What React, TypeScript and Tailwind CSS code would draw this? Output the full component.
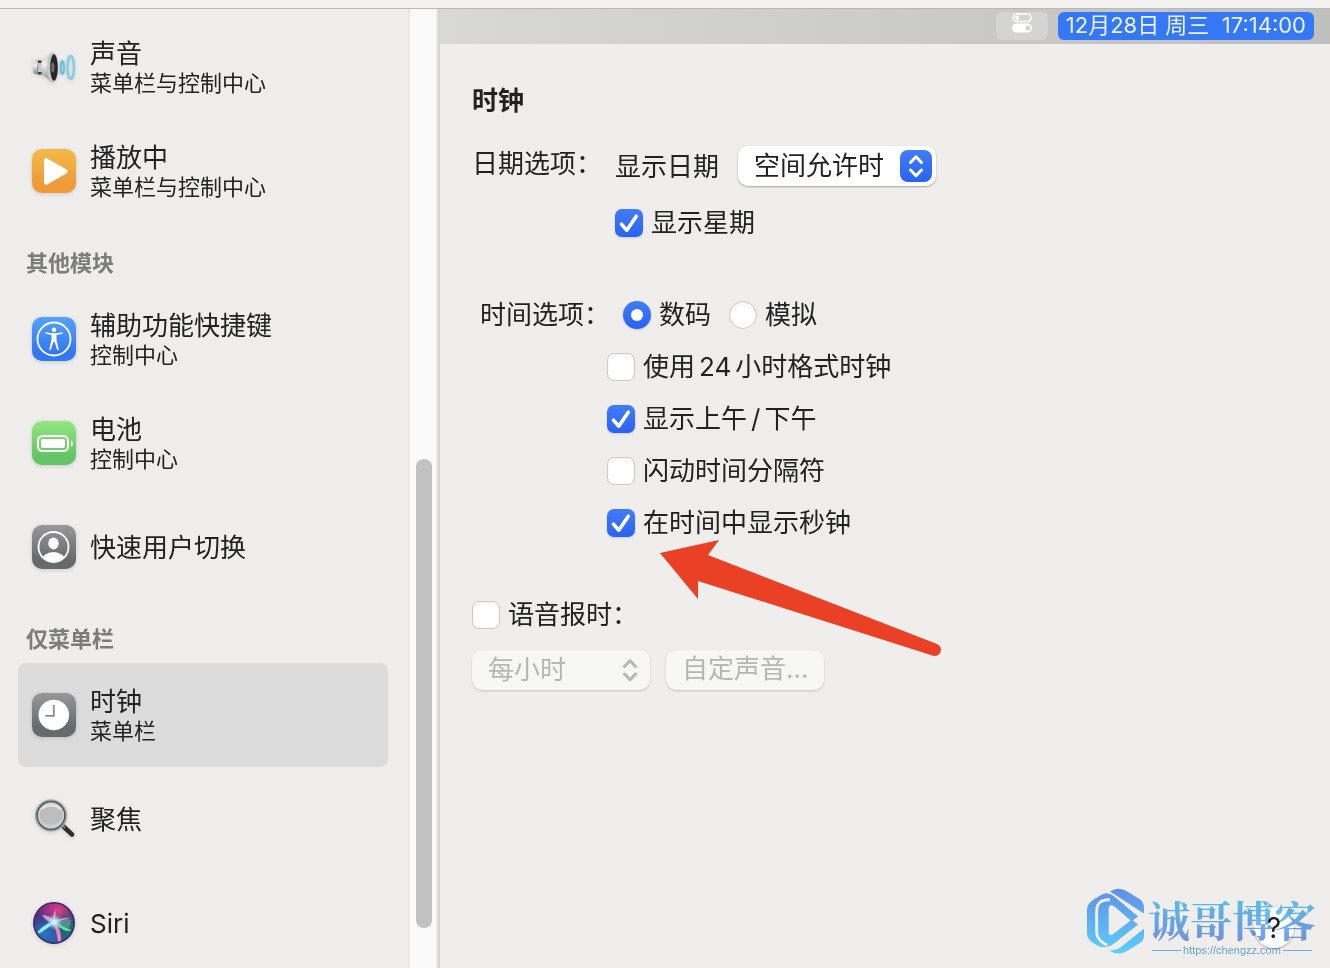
import { useState } from "react";
import type { ReactNode } from "react";

// ─── Sidebar icons ────────────────────────────────────────────────────────────
function Tile({ id, from, to, children }: { id: string; from: string; to: string; children: ReactNode }) {
    return (
        <svg className="w-11 h-11 flex-shrink-0 overflow-visible drop-shadow-sm" viewBox="0 0 44 44" fill="none">
            <defs>
                <linearGradient id={id} x1="0" y1="0" x2="0" y2="1">
                    <stop offset="0" stopColor={from} />
                    <stop offset="0.8" stopColor={to} />
                </linearGradient>
            </defs>
            <rect width="44" height="44" rx="10" fill={`url(#${id})`} />
            {children}
        </svg>
    );
}

function SoundIcon() {
    return (
        <svg className="w-11 h-11 flex-shrink-0 drop-shadow-sm" viewBox="0 0 44 44" fill="none">
            <defs>
                <linearGradient id="cone" x1="0" y1="0" x2="0" y2="1">
                    <stop offset="0" stopColor="#c5c8c9" />
                    <stop offset="0.4" stopColor="#eeefef" />
                    <stop offset="1" stopColor="#7f8384" />
                </linearGradient>
            </defs>
            <path d="M3 15q-2 1-2 7.500t2 6.500l6 .5V14.500z" fill="url(#cone)" />
            <path d="M6 15.500h4v14H6q-1-7 0-14z" fill="#3f4243" />
            <path d="M6 18h4v9H6z" fill="#c4c8c9" />
            <path d="M9.500 15C14 13.500 17 10 20 7.500v30C17 35 14 31 9.500 30z" fill="url(#cone)" />
            <ellipse cx="20.500" cy="22.500" rx="5.500" ry="15" fill="#c3c5c6" />
            <ellipse cx="22" cy="22.500" rx="3.800" ry="13.200" fill="#252728" />
            <ellipse cx="20.800" cy="22.500" rx="1.600" ry="5" fill="#6a6c6d" />
            <ellipse cx="30.300" cy="22.500" rx="1.600" ry="6.500" stroke="#69c1dc" strokeWidth="2.200" />
            <ellipse cx="38.700" cy="22.500" rx="3.200" ry="11.500" stroke="#84cde3" strokeWidth="2.400" />
        </svg>
    );
}

function PlayIcon() {
    return (
        <Tile id="play" from="#f1bb48" to="#f09a38">
            <path d="M12 11.200c0-2 1.500-2.800 3.200-1.800l19 10.900c1.900 1.100 1.900 3 0 4.100l-19 11c-1.700 1-3.200.2-3.200-1.800z" fill="#fff" />
        </Tile>
    );
}

function AccessibilityIcon() {
    return (
        <Tile id="access" from="#54a2f9" to="#3477f5">
            <circle cx="22" cy="22" r="16.500" stroke="#fff" strokeWidth="1.800" />
            <circle cx="22" cy="12.700" r="2.200" fill="#fff" />
            <path
                d="M13.500 15.300q8.500 2 17 0 .8 1-.3 1.400l-5.700 1.300v4.500l2.300 10.300q-.7 1.200-1.600.2L22.600 25h-1.200l-2.600 8q-.9 1-1.600-.2l2.300-10.300V18l-5.700-1.300q-1.100-.4-.3-1.400z"
                fill="#fff"
            />
        </Tile>
    );
}

function BatteryIcon() {
    return (
        <Tile id="battery" from="#93e781" to="#65c466">
            <rect x="6" y="15" width="30" height="15" rx="4.500" stroke="#fff" strokeWidth="2" />
            <rect x="9" y="18" width="24" height="9" rx="2" fill="#fff" />
            <path d="M39 19.500q2 1 2 3t-2 3z" fill="#fff" />
        </Tile>
    );
}

function UserIcon() {
    return (
        <Tile id="user" from="#98989c" to="#68696b">
            <clipPath id="userClip"><circle cx="21.500" cy="22" r="14.500" /></clipPath>
            <circle cx="21.500" cy="22" r="15" stroke="#fff" strokeWidth="1.800" />
            <ellipse cx="21.500" cy="18.500" rx="5.200" ry="6" fill="#fff" />
            <ellipse cx="21.500" cy="36" rx="12" ry="9" fill="#fff" clipPath="url(#userClip)" />
        </Tile>
    );
}

function ClockIcon() {
    return (
        <Tile id="clock" from="#98989c" to="#68696b">
            <circle cx="21.800" cy="22" r="15.300" fill="#fff" />
            <path d="M21.800 12v10.800H13.300" stroke="#8b8b8e" strokeWidth="1.800" />
        </Tile>
    );
}

function SpotlightIcon() {
    return (
        <svg className="w-11 h-11 flex-shrink-0 drop-shadow-sm" viewBox="0 0 44 44" fill="none">
            <path d="M32 30l8 7.500" stroke="#2c2d2e" strokeWidth="4.500" strokeLinecap="round" />
            <path d="M30 28l3 2.700" stroke="#8a8b8c" strokeWidth="2" />
            <circle cx="19" cy="18.500" r="15" fill="#c9cfd3" stroke="#9b9d9e" strokeWidth="2" />
            <circle cx="19" cy="18.500" r="13.800" stroke="#4a4c4d" strokeWidth="1.200" />
            <ellipse cx="19" cy="18.500" rx="11.500" ry="9.500" fill="#bdbdbc" />
            <path d="M9.500 12q9.500-7.500 19 0" stroke="#dfe7eb" strokeWidth="2" />
        </svg>
    );
}

function SiriIcon() {
    return (
        <svg className="w-11 h-11 flex-shrink-0 drop-shadow-sm" viewBox="0 0 44 44" fill="none">
            <defs>
                <linearGradient id="siriBase" x1="0.2" y1="0" x2="0.5" y2="1">
                    <stop offset="0" stopColor="#8c2a86" />
                    <stop offset="0.45" stopColor="#3e2f76" />
                    <stop offset="1" stopColor="#1f58a4" />
                </linearGradient>
                <radialGradient id="siriGlow">
                    <stop offset="0" stopColor="#fff" />
                    <stop offset="0.4" stopColor="#b7e9f6" stopOpacity="0.8" />
                    <stop offset="1" stopColor="#8fd8f0" stopOpacity="0" />
                </radialGradient>
                <radialGradient id="siriPink" cx="0.6" cy="0.2" r="0.45">
                    <stop offset="0" stopColor="#dd3c84" />
                    <stop offset="1" stopColor="#dd3c84" stopOpacity="0" />
                </radialGradient>
                <radialGradient id="siriTeal" cx="0.85" cy="0.65" r="0.45">
                    <stop offset="0" stopColor="#2b7068" />
                    <stop offset="1" stopColor="#2b7068" stopOpacity="0" />
                </radialGradient>
                <radialGradient id="siriBlue" cx="0.25" cy="0.75" r="0.5">
                    <stop offset="0" stopColor="#2a74c4" />
                    <stop offset="1" stopColor="#2a74c4" stopOpacity="0" />
                </radialGradient>
            </defs>
            <circle cx="22" cy="22" r="20.500" fill="url(#siriBase)" />
            <circle cx="22" cy="22" r="20.500" fill="url(#siriPink)" />
            <circle cx="22" cy="22" r="20.500" fill="url(#siriBlue)" />
            <circle cx="22" cy="22" r="20.500" fill="url(#siriTeal)" />
            <path d="M22 20q8-5 17-1 0 5-2 8-7-1-15-7z" fill="#6cc9b4" opacity="0.45" />
            <path d="M22 21l17 8q-3 2-7 0-6-3-10-8z" fill="#59e3ab" />
            <path d="M23 20Q13 22 5.500 31l2 1.500Q16 27 23 22z" fill="#8af0ea" />
            <path d="M21 21q4 10 5 20l3-1q1-10-6-20z" fill="#f07fc2" />
            <path d="M10 14q8 0 13 7-4-6 1-12-1 6-1 12 7-5 16-4-9 1-16 5-9-1-13-8z" fill="#dcb6ec" opacity="0.8" />
            <circle cx="22.500" cy="21" r="8" fill="url(#siriGlow)" />
            <circle cx="22" cy="22" r="20.200" stroke="#3c2a66" strokeWidth="1.400" />
        </svg>
    );
}

// ─── Sidebar ──────────────────────────────────────────────────────────────────
type Item = { title: string; subtitle?: string; icon: ReactNode };

const groups: { heading?: string; items: Item[] }[] = [
    {
        items: [
            { title: "声音", subtitle: "菜单栏与控制中心", icon: <SoundIcon /> },
            { title: "播放中", subtitle: "菜单栏与控制中心", icon: <PlayIcon /> },
        ],
    },
    {
        heading: "其他模块",
        items: [
            { title: "辅助功能快捷键", subtitle: "控制中心", icon: <AccessibilityIcon /> },
            { title: "电池", subtitle: "控制中心", icon: <BatteryIcon /> },
            { title: "快速用户切换", icon: <UserIcon /> },
        ],
    },
    {
        heading: "仅菜单栏",
        items: [
            { title: "时钟", subtitle: "菜单栏", icon: <ClockIcon /> },
            { title: "聚焦", icon: <SpotlightIcon /> },
            { title: "Siri", icon: <SiriIcon /> },
        ],
    },
];

function SidebarRow({ item, active, onSelect }: { item: Item; active: boolean; onSelect: () => void }) {
    return (
        <button
            onClick={onSelect}
            className={`w-full h-[104px] flex items-center gap-3.5 px-3.5 text-left rounded-lg ${active ? "bg-[#dcdcdc]" : ""}`}
        >
            {item.icon}
            <span className="flex flex-col pt-0.5">
                <span className="text-[26px] leading-[30px]">{item.title}</span>
                {item.subtitle && <span className="text-[22px] leading-7">{item.subtitle}</span>}
            </span>
        </button>
    );
}

// ─── Form controls ────────────────────────────────────────────────────────────
function Checkbox({ label, defaultChecked }: { label: ReactNode; defaultChecked?: boolean }) {
    return (
        <label className="flex items-center gap-2 leading-7">
            <span className="grid flex-shrink-0">
                <input
                    type="checkbox"
                    defaultChecked={defaultChecked}
                    className="
                        peer col-start-1 row-start-1 appearance-none w-7 h-7 rounded-[7px] bg-white border border-[#cbcbca] shadow-inner
                        checked:border-0 checked:bg-linear-to-b checked:from-[#427cf7] checked:to-[#2962f5] checked:shadow-sm
                    "
                />
                <svg className="col-start-1 row-start-1 w-7 h-7 hidden peer-checked:block pointer-events-none" viewBox="0 0 28 28" fill="none">
                    <path d="M6.500 15.200l5.300 6L21.300 7.200" stroke="#fff" strokeWidth="3.600" strokeLinecap="round" strokeLinejoin="round" />
                </svg>
            </span>
            <span>{label}</span>
        </label>
    );
}

function Radio({ label, defaultChecked }: { label: string; defaultChecked?: boolean }) {
    return (
        <label className="flex items-center gap-2 leading-7">
            <span className="grid place-items-center flex-shrink-0">
                <input
                    type="radio"
                    name="clock-style"
                    defaultChecked={defaultChecked}
                    className="
                        peer col-start-1 row-start-1 appearance-none w-7 h-7 rounded-full bg-white border border-[#cbcbca] shadow-inner
                        checked:border-0 checked:bg-linear-to-b checked:from-[#427cf7] checked:to-[#2962f5] checked:shadow-sm
                    "
                />
                <span className="col-start-1 row-start-1 w-3 h-3 rounded-full bg-white hidden peer-checked:block pointer-events-none" />
            </span>
            {label}
        </label>
    );
}

function Chevrons({ className }: { className: string }) {
    return (
        <svg className={className} viewBox="0 0 32 32" fill="none" stroke="currentColor" strokeWidth="3" strokeLinecap="round" strokeLinejoin="round">
            <path d="M10.500 12.500L16 6.800l5.500 5.700M10.500 20L16 25.700l5.500-5.700" />
        </svg>
    );
}

function PointerArrow() {
    return (
        <svg className="absolute left-[53px] top-[30px] w-[282px] h-[118px] pointer-events-none" viewBox="0 0 282 118">
            <path d="M0 14L59 1 48 16l229 89q4 2 4 6-1 6-7 6L38 42v18z" fill="#ea4126" />
        </svg>
    );
}

// ─── Blog watermark ───────────────────────────────────────────────────────────
function Watermark() {
    return (
        <div className="absolute right-3.5 bottom-2.5 flex items-start gap-1 pointer-events-none">
            <svg className="w-[57px] h-[66px]" viewBox="13 17 171 197" fill="none">
                <defs>
                    <linearGradient id="logo" gradientUnits="userSpaceOnUse" x1="0" y1="17" x2="0" y2="214">
                        <stop offset="0" stopColor="#628fe9" />
                        <stop offset="1" stopColor="#59cff9" />
                    </linearGradient>
                </defs>
                <g fill="url(#logo)">
                    <path d="M82 27Q104 12 128 24L168 48Q184 58 184 76V93Z" />
                    <path
                        fillRule="evenodd"
                        d="M92 40L166 102 150 114 166 126 98 180Q76 198 50 192L30 180Q13 170 13 150V82Q13 66 28 55L54 38Q74 26 92 40ZM78 80V150Q78 162 90 156L144 114 96 72Q78 62 78 80Z"
                    />
                    <path d="M184 139V158Q184 174 168 184L130 207Q104 220 80 204Q98 206 114 194Z" />
                </g>
                <path d="M82 52Q43 50 42 84V150Q43 174 74 188" stroke="#efeeec" strokeWidth="9" />
            </svg>
            <div className="mt-2 flex flex-col items-center mix-blend-multiply">
                <span className="font-['Noto_Serif_CJK_SC','Noto_Sans_CJK_SC',serif] font-bold text-[42px] leading-[46px] text-transparent bg-clip-text bg-linear-to-b from-[#55d0fb] to-[#789aec]">
                    诚哥博客
                </span>
                <span className="w-full flex items-center gap-0.5 px-1 font-['Liberation_Sans',sans-serif] text-[11px] leading-4 text-[#73aef0]">
                    <span className="flex-1 h-px bg-[#73b9f0]" />
                    https://chengzz.com
                    <span className="flex-1 h-px bg-[#73b9f0]" />
                </span>
            </div>
        </div>
    );
}

export default function App() {
    const [selected, setSelected] = useState("时钟");

    return (
        <div className="h-screen flex flex-col overflow-hidden bg-[#efeeec] text-[#222] text-[26px] font-['Inter','Noto_Sans_CJK_SC',sans-serif]">
            {/* Bottom edge of the window toolbar */}
            <div className="h-[9px] flex-shrink-0 bg-[#f3f2f0] border-b border-[#b9b8b7]" />

            <div className="flex-1 min-h-0 flex">
                {/* Module list */}
                <nav className="w-[408px] flex-shrink-0 overflow-hidden pt-1.5 pl-[18px] pr-5">
                    {groups.map((group, i) => (
                        <div key={i}>
                            {group.heading && (
                                <h2 className="h-16 pt-4 pl-2 flex items-center text-[22px] font-bold text-[#7c7c7b]">{group.heading}</h2>
                            )}
                            {group.items.map((item) => (
                                <SidebarRow
                                    key={item.title}
                                    item={item}
                                    active={selected === item.title}
                                    onSelect={() => setSelected(item.title)}
                                />
                            ))}
                        </div>
                    ))}
                </nav>

                {/* Scrollbar */}
                <div className="w-[30px] flex-shrink-0 flex flex-col justify-end items-center pl-0.5 pb-10 bg-[#fafafa] border-x-2 border-[#e7e7e6]">
                    <div className="w-4 h-[51%] rounded-full bg-[#c2c2c2]" />
                </div>

                <main className="relative flex-1 min-w-0 border-l-2 border-[#d3d3d1]">
                    {/* Menu bar preview */}
                    <div className="h-[35px] flex items-center justify-end gap-2.5 pr-4 pb-px bg-linear-to-r from-[#d8d8d6] to-[#bfbfbd]">
                        <button aria-label="控制中心" className="w-[52px] h-7 rounded-md bg-[#d4d4d3] flex justify-center">
                            <svg className="w-[22px] h-[22px]" viewBox="0 0 22 22" fill="none">
                                <rect x="2" y="2" width="18" height="7.500" rx="3.750" stroke="#fff" strokeWidth="1.600" />
                                <circle cx="6" cy="5.750" r="2.200" fill="#fff" />
                                <rect x="1" y="11.500" width="20" height="9" rx="4.500" fill="#fff" />
                                <circle cx="17" cy="16" r="2.600" fill="#d4d4d3" />
                            </svg>
                        </button>
                        <time className="h-7 px-2 rounded-md bg-[#3478f6] text-white/90 text-[22px] leading-[26px] whitespace-pre">
                            12月28日 周三  17:14:00
                        </time>
                    </div>

                    <form className="pt-9 px-8 whitespace-nowrap">
                        <h1 className="font-bold leading-[42px]">时钟</h1>

                        <fieldset className="mt-6 flex">
                            <div className="w-[143px] leading-9">日期选项：</div>
                            <div className="flex flex-col gap-[23px]">
                                <div className="flex items-center gap-[19px]">
                                    <label htmlFor="show-date">显示日期</label>
                                    <span className="grid items-center">
                                        <select
                                            id="show-date"
                                            className="col-start-1 row-start-1 appearance-none w-[198px] h-10 pl-4 pb-0.5 rounded-[10px] bg-white shadow-[0_1px_2px_rgba(0,0,0,0.3)]"
                                        >
                                            <option>空间允许时</option>
                                            <option>总是</option>
                                            <option>永不</option>
                                        </select>
                                        <Chevrons className="col-start-1 row-start-1 justify-self-end mr-1 w-8 h-8 rounded-lg text-white bg-linear-to-b from-[#427cf7] to-[#2962f5] pointer-events-none" />
                                    </span>
                                </div>
                                <Checkbox label="显示星期" defaultChecked />
                            </div>
                        </fieldset>

                        <fieldset className="mt-16 pl-2 flex">
                            <div className="w-[127px] leading-7">时间选项：</div>
                            <div className="flex flex-col gap-6">
                                <div className="flex gap-[18px] pl-4">
                                    <Radio label="数码" defaultChecked />
                                    <Radio label="模拟" />
                                </div>
                                <Checkbox label={<>使用<span className="mx-1">24</span>小时格式时钟</>} />
                                <Checkbox label={<>显示上午<span className="mx-1">/</span>下午</>} defaultChecked />
                                <Checkbox label="闪动时间分隔符" />
                                <div className="relative">
                                    <Checkbox label="在时间中显示秒钟" defaultChecked />
                                    <PointerArrow />
                                </div>
                            </div>
                        </fieldset>

                        <fieldset className="mt-16 flex flex-col gap-[21px]">
                            <Checkbox label="语音报时：" />
                            <div className="flex gap-4 text-[#b6b6b5]">
                                <span className="grid items-center">
                                    <select
                                        disabled
                                        aria-label="报时间隔"
                                        className="col-start-1 row-start-1 appearance-none w-[178px] h-10 pl-4 pb-0.5 rounded-[10px] bg-[#f7f7f5] shadow-[0_1px_2px_rgba(0,0,0,0.18)]"
                                    >
                                        <option>每小时</option>
                                    </select>
                                    <Chevrons className="col-start-1 row-start-1 justify-self-end mr-1 w-8 h-8 pointer-events-none" />
                                </span>
                                <button
                                    type="button"
                                    disabled
                                    className="h-10 px-4 pb-0.5 rounded-[10px] bg-[#f7f7f5] leading-9 shadow-[0_1px_2px_rgba(0,0,0,0.18)]"
                                >
                                    自定声音...
                                </button>
                            </div>
                        </fieldset>
                    </form>

                    <button
                        aria-label="帮助"
                        className="absolute right-9 bottom-5 w-10 h-10 rounded-full bg-white text-[28px] leading-10 shadow-[0_1px_2px_rgba(0,0,0,0.3)]"
                    >
                        ?
                    </button>
                    <Watermark />
                </main>
            </div>
        </div>
    );
}
